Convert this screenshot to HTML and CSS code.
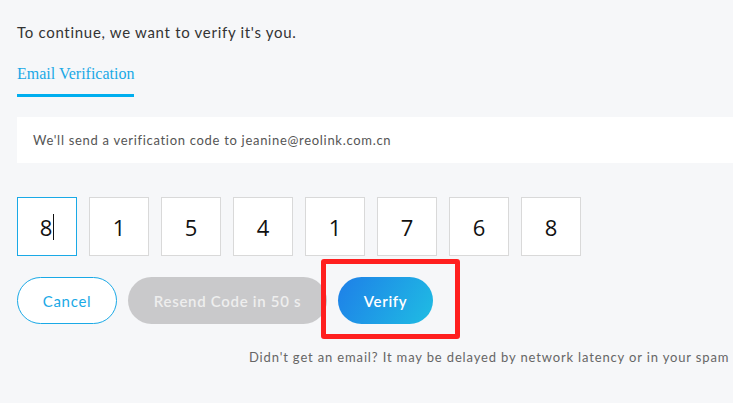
FILE: index.html
```html
<!DOCTYPE html>
<html>
<head>
<meta charset="utf-8">
<link rel="stylesheet" href="styles.css">
</head>
<body>
<div class="page">
  <p class="intro">To continue, we want to verify it's you.</p>
  <div class="tabs"><span class="tab">Email Verification</span></div>
  <div class="notice">We'll send a verification code to jeanine@reolink.com.cn</div>
  <div class="codes">
    <div class="code active">8<span class="caret"></span></div>
    <div class="code">1</div>
    <div class="code">5</div>
    <div class="code">4</div>
    <div class="code">1</div>
    <div class="code">7</div>
    <div class="code">6</div>
    <div class="code">8</div>
  </div>
  <div class="actions">
    <button class="btn cancel">Cancel</button>
    <button class="btn resend">Resend Code in 50 s</button>
    <div class="verify-wrap">
      <button class="btn verify">Verify</button>
      <span class="highlight"></span>
    </div>
  </div>
  <p class="hint">Didn't get an email? It may be delayed by network latency or in your spam</p>
</div>
</body>
</html>
```
FILE: styles.css
```css
html, body {
  margin: 0;
  padding: 0;
  background: #f6f7f9;
  overflow: hidden;
}
.page {
  width: 716px;
  padding: 0 0 0 17px;
  font-family: Lato, "Open Sans", sans-serif;
  color: #333;
}
.intro {
  margin: 0;
  padding-top: 22px;
  font-size: 15px;
  line-height: 20px;
  letter-spacing: 0.7px;
  color: #333;
}
.tabs {
  margin-top: 21px;
}
.tab {
  display: inline-block;
  font-family: "Liberation Serif", serif;
  font-size: 16px;
  line-height: 18px;
  color: #1aa9e6;
  padding-bottom: 11px;
  border-bottom: 3px solid #00aeef;
}
.notice {
  margin-top: 20px;
  height: 46px;
  background: #fff;
  display: flex;
  align-items: center;
  padding-left: 16px;
  font-size: 13px;
  letter-spacing: 0.7px;
  color: #555;
}
.codes {
  display: flex;
  gap: 12px;
  margin-top: 34px;
}
.code {
  width: 58px;
  height: 57px;
  border: 1px solid #d9d9d9;
  background: #fff;
  display: flex;
  align-items: center;
  justify-content: center;
  font-family: "Open Sans", "Noto Sans", sans-serif;
  font-size: 22px;
  color: #111;
}
.code.active {
  border-color: #1aa9e6;
}
.caret {
  display: inline-block;
  width: 1px;
  height: 26px;
  background: #111;
  margin-left: 1px;
}
.actions {
  display: flex;
  align-items: center;
  gap: 11px;
  margin-top: 21px;
}
.btn {
  height: 47px;
  border-radius: 24px;
  font-family: Lato, "Open Sans", sans-serif;
  font-size: 15px;
  letter-spacing: 0.7px;
  border: none;
  padding: 0;
  cursor: pointer;
}
.cancel {
  width: 100px;
  background: #fff;
  border: 1px solid #1aa9e6;
  color: #1aa9e6;
}
.resend {
  width: 199px;
  background: #c9c9cb;
  color: #eeeeee;
  font-weight: 600;
}
.verify-wrap {
  position: relative;
}
.verify {
  width: 95px;
  background: linear-gradient(120deg, #1e7fe8 0%, #1fbde3 100%);
  color: #fff;
  font-weight: 600;
  display: block;
}
.highlight {
  position: absolute;
  left: -17px;
  top: -18px;
  width: 129px;
  height: 70px;
  border: 5px solid #ff1f1f;
  border-radius: 3px;
}
.hint {
  margin: 25px 0 0 232px;
  white-space: nowrap;
  font-size: 13px;
  letter-spacing: 0.85px;
  color: #666;
}
```
